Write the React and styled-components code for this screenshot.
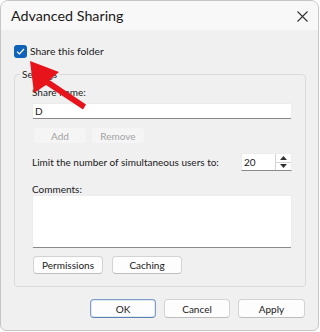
import React from 'react';
import styled, { createGlobalStyle } from 'styled-components';

const GlobalStyle = createGlobalStyle`
  body {
    margin: 0;
    background: #ffffff;
  }
`

const Window = styled.div`
  position: relative;
  width: 319px;
  height: 331px;
  box-sizing: border-box;
  border: 1px solid #c6c6c6;
  border-radius: 8px 8px 6px 6px;
  background: #f0f0f0;
  overflow: hidden;
  display: flex;
  flex-direction: column;
  font-family: Lato, "Noto Sans", sans-serif;
  font-size: 10px;
  color: #1a1a1a;
  white-space: nowrap;
`

const TitleBar = styled.div`
  height: 29px;
  flex-shrink: 0;
  display: flex;
  align-items: center;
  justify-content: space-between;
  padding: 0 10px 0 10px;
  background: #f8f8f8;
`

const Title = styled.span`
  font-size: 14.3px;
  color: #1a1a1a;
`

const CloseIcon = styled.svg`
  width: 11px;
  height: 11px;
  margin-top: 2px;
`

const Body = styled.div`
  display: flex;
  flex-direction: column;
  padding: 14px 12px 0 13px;
`

const CheckRow = styled.label`
  display: flex;
  align-items: center;
  gap: 3px;
  height: 14px;
  font-size: 10.3px;
`

const Checkbox = styled.span`
  width: 13px;
  height: 13px;
  border-radius: 3px;
  background: #0f62b8;
  display: flex;
  align-items: center;
  justify-content: center;
`

const GroupBox = styled.fieldset`
  margin: 9px 0 0;
  padding: 0 13px 12px 17px;
  border: 1px solid #dadada;
  border-radius: 4px;
  display: flex;
  flex-direction: column;
  min-width: 0;
`

const Legend = styled.legend`
  margin-left: -12px;
  padding: 0 2px;
  line-height: 14px;
`

const Label = styled.div`
  line-height: ${({ $lh }) => $lh || 14}px;
  height: ${({ $lh }) => $lh || 14}px;
  margin-top: ${({ $mt }) => $mt || 0}px;
`

const TextBox = styled.div`
  box-sizing: border-box;
  height: ${({ $h }) => $h}px;
  margin-top: ${({ $mt }) => $mt || 0}px;
  background: #ffffff;
  border: 1px solid #ececec;
  border-bottom-color: #8a8a8a;
  border-radius: 2px;
  padding: 0 2px;
  line-height: ${({ $h }) => $h - 2}px;
`

const ButtonRow = styled.div`
  display: flex;
  gap: ${({ $gap }) => $gap}px;
  margin-top: ${({ $mt }) => $mt || 0}px;
  margin-left: ${({ $ml }) => $ml || 0}px;
  justify-content: ${({ $end }) => ($end ? 'flex-end' : 'flex-start')};
  padding-right: ${({ $pr }) => $pr || 0}px;
`

const Button = styled.div`
  box-sizing: border-box;
  width: ${({ $w }) => $w}px;
  height: ${({ $h }) => $h}px;
  display: flex;
  align-items: center;
  justify-content: center;
  border-radius: 4px;
  font-size: 10px;
  background: ${({ $disabled }) => ($disabled ? '#f5f5f5' : '#fdfdfd')};
  color: ${({ $disabled }) => ($disabled ? '#a3a3a3' : '#1a1a1a')};
  border: 1px solid ${({ $disabled, $primary }) => ($disabled ? '#f0f0f0' : $primary ? '#7d9cc6' : '#d3d3d3')};
  border-bottom-color: ${({ $disabled, $primary }) => ($disabled ? '#f0f0f0' : $primary ? '#5a80b4' : '#bdbdbd')};
  box-shadow: ${({ $primary }) => ($primary ? 'inset 0 0 0 1px #e2e9f3' : 'none')};
`

const SpinRow = styled.div`
  display: flex;
  align-items: center;
  justify-content: space-between;
  margin-top: 9px;
`

const Spinner = styled.div`
  box-sizing: border-box;
  width: 51px;
  height: 18px;
  display: flex;
  background: #ffffff;
  border: 1px solid #ececec;
  border-bottom-color: #8a8a8a;
`

const SpinValue = styled.div`
  flex: 1;
  padding-left: 2px;
  line-height: 16px;
`

const SpinArrows = styled.div`
  width: 15px;
  display: flex;
  flex-direction: column;
  border-left: 1px solid #d6d6d6;
`

const SpinArrow = styled.div`
  flex: 1;
  display: flex;
  align-items: center;
  justify-content: center;
  border-top: ${({ $down }) => ($down ? '1px solid #d6d6d6' : 'none')};
`

const Footer = styled.div`
  margin-top: 12px;
`

const Annotation = styled.svg`
  position: absolute;
  left: 0;
  top: 0;
  pointer-events: none;
`

const Tri = ({ down }) => (
  <svg width="7" height="4" viewBox="0 0 7 4">
    <path d={down ? 'M0 0 H7 L3.5 4 Z' : 'M0 4 H7 L3.5 0 Z'} fill="#333" />
  </svg>
)

const App = () => {
  return (
    <>
      <GlobalStyle />
      <Window>
        <TitleBar>
          <Title>Advanced Sharing</Title>
          <CloseIcon viewBox="0 0 11 11">
            <path d="M0.5 0.5 L10.5 10.5 M10.5 0.5 L0.5 10.5" stroke="#333" strokeWidth="1.1" />
          </CloseIcon>
        </TitleBar>
        <Body>
          <CheckRow>
            <Checkbox>
              <svg width="9" height="7" viewBox="0 0 9 7">
                <path d="M1 3.6 L3.4 6 L8 1" fill="none" stroke="#fff" strokeWidth="1.2" />
              </svg>
            </Checkbox>
            Share this folder
          </CheckRow>
          <GroupBox>
            <Legend>Settings</Legend>
            <Label $mt={4}>Share name:</Label>
            <TextBox $h={16} $mt={4}>D</TextBox>
            <ButtonRow $gap={4} $mt={8} $ml={1}>
              <Button $w={54} $h={17} $disabled>Add</Button>
              <Button $w={54} $h={17} $disabled>Remove</Button>
            </ButtonRow>
            <SpinRow>
              <span>Limit the number of simultaneous users to:</span>
              <Spinner>
                <SpinValue>20</SpinValue>
                <SpinArrows>
                  <SpinArrow><Tri /></SpinArrow>
                  <SpinArrow $down><Tri down /></SpinArrow>
                </SpinArrows>
              </Spinner>
            </SpinRow>
            <Label $mt={12} $lh={12}>Comments:</Label>
            <TextBox $h={53} $mt={0} />
            <ButtonRow $gap={9} $mt={8} $ml={1}>
              <Button $w={70} $h={18}>Permissions</Button>
              <Button $w={70} $h={18}>Caching</Button>
            </ButtonRow>
          </GroupBox>
          <Footer>
            <ButtonRow $gap={8} $end $pr={1}>
              <Button $w={66} $h={19} $primary>OK</Button>
              <Button $w={66} $h={19}>Cancel</Button>
              <Button $w={67} $h={19}>Apply</Button>
            </ButtonRow>
          </Footer>
        </Body>
        <Annotation width="319" height="331" viewBox="0 0 319 331">
          <polygon
            points="29,60 58,71 48.5,79 85,103.5 82,108.5 45,84 33,92"
            fill="#e8141b"
          />
        </Annotation>
      </Window>
    </>
  )
}

export default App;
